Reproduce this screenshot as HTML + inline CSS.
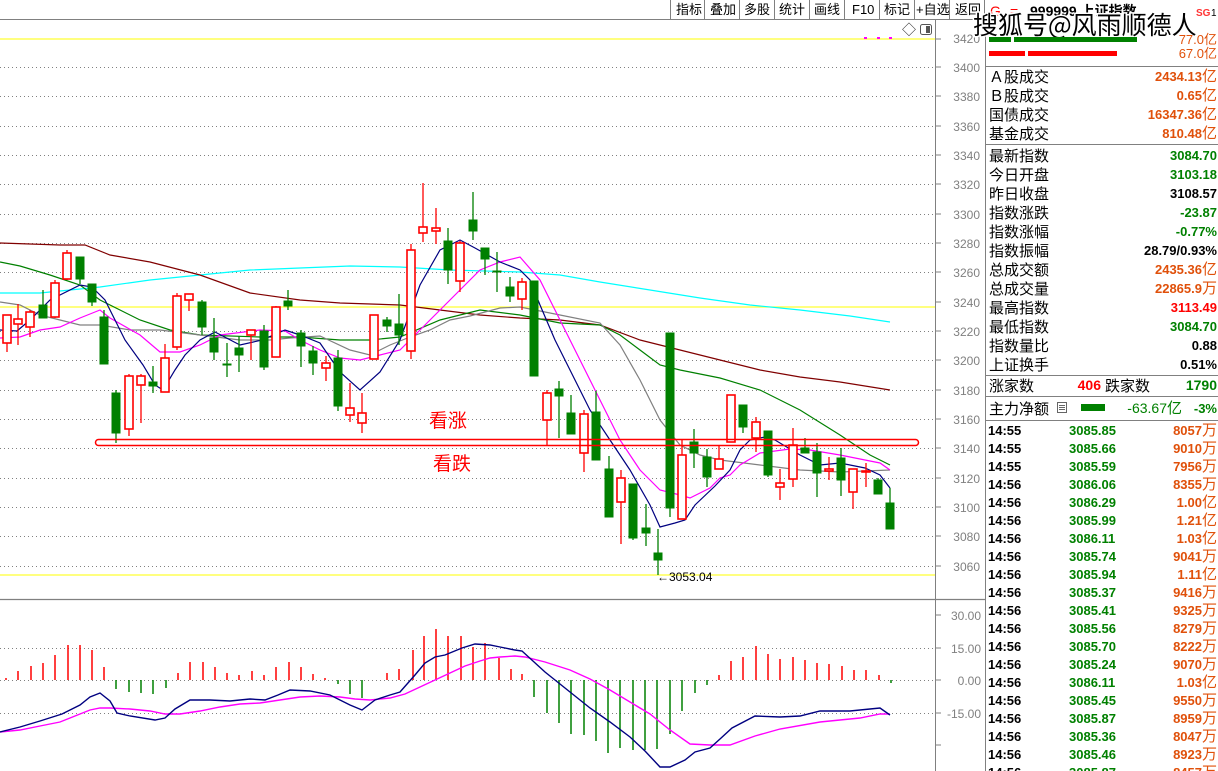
<!DOCTYPE html>
<html><head><meta charset="utf-8">
<style>
html,body{margin:0;padding:0;background:#fff;width:1218px;height:771px;overflow:hidden;position:relative;font-family:"Liberation Sans","Noto Sans CJK SC",sans-serif}
svg{position:absolute;left:0;top:0}
.r line{stroke:#f00;stroke-width:1.3}
.r rect{fill:#fff;stroke:#f00;stroke-width:1.6}
.g line{stroke:#008000;stroke-width:1.3}
.g rect{fill:#008000;stroke:#008000;stroke-width:1}
.ax{font-size:12px;fill:#808080;text-anchor:end}
.lb{font-size:15px;fill:#000}
.v{font-size:13px;font-weight:bold;text-anchor:end}
.t{font-size:13px;font-weight:bold}
</style></head><body>
<svg width="1218" height="771" viewBox="0 0 1218 771">
<!-- toolbar -->
<g font-size="13" fill="#000">
<line x1="0" y1="19.5" x2="985" y2="19.5" stroke="#808080"/>
<g stroke="#808080">
<line x1="670.5" y1="0" x2="670.5" y2="19"/><line x1="704.5" y1="0" x2="704.5" y2="19"/><line x1="739.5" y1="0" x2="739.5" y2="19"/><line x1="774.5" y1="0" x2="774.5" y2="19"/><line x1="809.5" y1="0" x2="809.5" y2="19"/><line x1="844.5" y1="0" x2="844.5" y2="19"/><line x1="879.5" y1="0" x2="879.5" y2="19"/><line x1="914.5" y1="0" x2="914.5" y2="19"/><line x1="949.5" y1="0" x2="949.5" y2="19"/><line x1="984.5" y1="0" x2="984.5" y2="19"/>
</g>
<text x="676" y="14">指标</text><text x="710" y="14">叠加</text><text x="744" y="14">多股</text><text x="779" y="14">统计</text><text x="814" y="14">画线</text><text x="852" y="14">F10</text><text x="884" y="14">标记</text><text x="916" y="14">+自选</text><text x="955" y="14">返回</text>
</g>
<!-- grid -->
<g stroke="#808080" stroke-dasharray="1,3" stroke-width="1">
<line x1="0" y1="67.5" x2="935" y2="67.5"/><line x1="0" y1="96.5" x2="935" y2="96.5"/><line x1="0" y1="126.5" x2="935" y2="126.5"/><line x1="0" y1="155.5" x2="935" y2="155.5"/><line x1="0" y1="184.5" x2="935" y2="184.5"/><line x1="0" y1="214.5" x2="935" y2="214.5"/><line x1="0" y1="243.5" x2="935" y2="243.5"/><line x1="0" y1="272.5" x2="935" y2="272.5"/><line x1="0" y1="331.5" x2="935" y2="331.5"/><line x1="0" y1="360.5" x2="935" y2="360.5"/><line x1="0" y1="390.5" x2="935" y2="390.5"/><line x1="0" y1="419.5" x2="935" y2="419.5"/><line x1="0" y1="448.5" x2="935" y2="448.5"/><line x1="0" y1="478.5" x2="935" y2="478.5"/><line x1="0" y1="507.5" x2="935" y2="507.5"/><line x1="0" y1="536.5" x2="935" y2="536.5"/><line x1="0" y1="566.5" x2="935" y2="566.5"/>
<line x1="0" y1="648.5" x2="935" y2="648.5"/><line x1="0" y1="680.5" x2="935" y2="680.5"/><line x1="0" y1="713.5" x2="935" y2="713.5"/>
</g>
<g stroke="#ffff33" stroke-width="1.3">
<line x1="0" y1="39" x2="935" y2="39"/><line x1="0" y1="307" x2="935" y2="307"/><line x1="0" y1="575" x2="935" y2="575"/>
</g>
<g fill="#ff00ff"><rect x="864" y="37" width="3" height="2"/><rect x="877" y="37" width="3" height="2"/><rect x="889" y="37" width="3" height="2"/></g>
<text x="902" y="35" font-size="14" fill="#333">◇</text>
<rect x="920.5" y="24.5" width="11" height="10" rx="2" fill="#fff" stroke="#555"/><rect x="926" y="26" width="4" height="7" fill="#555"/>
<!-- axis -->
<line x1="935.5" y1="20" x2="935.5" y2="771" stroke="#808080"/>
<g stroke="#808080">
<line x1="936" y1="39" x2="941" y2="39"/><line x1="936" y1="67" x2="941" y2="67"/><line x1="936" y1="96" x2="941" y2="96"/><line x1="936" y1="126" x2="941" y2="126"/><line x1="936" y1="155" x2="941" y2="155"/><line x1="936" y1="184" x2="941" y2="184"/><line x1="936" y1="214" x2="941" y2="214"/><line x1="936" y1="243" x2="941" y2="243"/><line x1="936" y1="272" x2="941" y2="272"/><line x1="936" y1="302" x2="941" y2="302"/><line x1="936" y1="331" x2="941" y2="331"/><line x1="936" y1="360" x2="941" y2="360"/><line x1="936" y1="390" x2="941" y2="390"/><line x1="936" y1="419" x2="941" y2="419"/><line x1="936" y1="448" x2="941" y2="448"/><line x1="936" y1="478" x2="941" y2="478"/><line x1="936" y1="507" x2="941" y2="507"/><line x1="936" y1="536" x2="941" y2="536"/><line x1="936" y1="566" x2="941" y2="566"/>
<line x1="936" y1="615" x2="941" y2="615"/><line x1="936" y1="648" x2="941" y2="648"/><line x1="936" y1="680" x2="941" y2="680"/><line x1="936" y1="713" x2="941" y2="713"/><line x1="936" y1="745" x2="941" y2="745"/>
</g>
<g class="ax">
<text x="980" y="43">3420</text><text x="980" y="72">3400</text><text x="980" y="101">3380</text><text x="980" y="131">3360</text><text x="980" y="160">3340</text><text x="980" y="189">3320</text><text x="980" y="219">3300</text><text x="980" y="248">3280</text><text x="980" y="277">3260</text><text x="980" y="307">3240</text><text x="980" y="336">3220</text><text x="980" y="365">3200</text><text x="980" y="395">3180</text><text x="980" y="424">3160</text><text x="980" y="453">3140</text><text x="980" y="483">3120</text><text x="980" y="512">3100</text><text x="980" y="541">3080</text><text x="980" y="571">3060</text>
<text x="981" y="620">30.00</text><text x="981" y="653">15.00</text><text x="981" y="685">0.00</text><text x="981" y="718">-15.00</text>
</g>
<line x1="0" y1="599.5" x2="985" y2="599.5" stroke="#808080" stroke-width="1.3"/>
<!-- MAs -->
<g fill="none" stroke-width="1.2">
<polyline stroke="#00ffff" points="0,293 40,293 100,287 150,280 200,275 250,270 300,268 350,266 400,267 450,270 520,272 560,275 600,282 650,290 700,298 750,305 800,310 850,316 890,322"/>
<polyline stroke="#800000" points="0,243 60,245 85,245 110,255 150,262 200,275 250,293 300,300 340,303 400,305 440,310 480,315 520,318 560,320 600,325 640,340 680,350 720,360 760,370 800,377 840,382 890,390"/>
<polyline stroke="#008000" points="0,262 20,266 50,275 80,285 100,300 120,310 140,320 170,330 200,335 260,337 300,337 340,340 370,340 400,337 440,320 480,310 520,315 560,323 600,325 620,335 640,350 660,365 680,370 720,378 760,390 800,410 840,435 870,455 890,465"/>
<polyline stroke="#808080" points="0,302 20,305 40,315 60,320 80,325 100,325 130,330 160,330 200,335 240,340 270,340 290,338 320,336 350,350 370,355 390,345 410,337 430,330 450,320 470,316 500,308 520,307 560,315 600,323 620,345 640,380 660,420 680,445 700,455 720,460 760,465 800,470 840,472 890,470"/>
<polyline stroke="#ff00ff" points="0,338 20,337 40,330 60,327 80,318 100,310 110,318 140,335 160,352 180,352 200,345 220,335 260,330 285,331 300,340 320,350 340,358 360,360 380,355 400,350 420,330 440,310 460,290 480,270 500,262 520,257 540,280 560,320 580,360 600,400 620,440 640,470 660,490 680,495 690,498 710,488 720,478 730,475 740,465 760,453 790,449 810,450 840,455 880,463 890,470"/>
<polyline stroke="#000080" points="0,330 17,331 30,320 50,300 80,285 92,287 105,300 125,340 143,365 155,385 163,390 175,370 185,355 200,340 215,332 240,345 262,340 285,330 300,335 320,343 340,372 360,390 380,372 400,340 420,285 440,250 460,240 475,248 500,262 520,270 530,280 540,305 555,340 570,370 590,410 610,440 630,470 650,505 660,527 675,523 685,520 695,505 715,486 730,470 740,450 750,440 765,437 775,440 800,455 820,465 840,463 865,468 880,475 890,488"/>
</g>
<!-- candles -->
<g class="r">
<line x1="7" y1="315" x2="7" y2="352"/><rect x="3" y="315" width="8" height="28"/>
<line x1="18" y1="304" x2="18" y2="345"/><rect x="14" y="319" width="8" height="5"/>
<line x1="30" y1="310" x2="30" y2="337"/><rect x="26" y="312" width="8" height="15"/>
<line x1="55" y1="280" x2="55" y2="318"/><rect x="51" y="283" width="8" height="34"/>
<line x1="67" y1="250" x2="67" y2="280"/><rect x="63" y="253" width="8" height="26"/>
<line x1="129" y1="374" x2="129" y2="436"/><rect x="125" y="376" width="8" height="53"/>
<line x1="141" y1="374" x2="141" y2="423"/><rect x="137" y="376" width="8" height="9"/>
<line x1="165" y1="344" x2="165" y2="392"/><rect x="161" y="358" width="8" height="34"/>
<line x1="177" y1="293" x2="177" y2="350"/><rect x="173" y="296" width="8" height="51"/>
<line x1="189" y1="294" x2="189" y2="311"/><rect x="185" y="294" width="8" height="6"/>
<line x1="251" y1="330" x2="251" y2="360"/><rect x="247" y="330" width="8" height="5"/>
<line x1="276" y1="306" x2="276" y2="357"/><rect x="272" y="307" width="8" height="50"/>
<line x1="326" y1="356" x2="326" y2="381"/><rect x="322" y="363" width="8" height="5"/>
<line x1="350" y1="383" x2="350" y2="422"/><rect x="346" y="408" width="8" height="7"/>
<line x1="362" y1="393" x2="362" y2="433"/><rect x="358" y="413" width="8" height="10"/>
<line x1="374" y1="315" x2="374" y2="359"/><rect x="370" y="315" width="8" height="44"/>
<line x1="411" y1="244" x2="411" y2="359"/><rect x="407" y="250" width="8" height="101"/>
<line x1="423" y1="183" x2="423" y2="242"/><rect x="419" y="227" width="8" height="6"/>
<line x1="436" y1="208" x2="436" y2="244"/><rect x="432" y="228" width="8" height="3"/>
<line x1="460" y1="241" x2="460" y2="292"/><rect x="456" y="243" width="8" height="38"/>
<line x1="522" y1="278" x2="522" y2="310"/><rect x="518" y="282" width="8" height="17"/>
<line x1="547" y1="390" x2="547" y2="445"/><rect x="543" y="393" width="8" height="27"/>
<line x1="584" y1="410" x2="584" y2="472"/><rect x="580" y="414" width="8" height="39"/>
<line x1="621" y1="470" x2="621" y2="544"/><rect x="617" y="478" width="8" height="24"/>
<line x1="682" y1="440" x2="682" y2="519"/><rect x="678" y="455" width="8" height="64"/>
<line x1="719" y1="446" x2="719" y2="469"/><rect x="715" y="459" width="8" height="10"/>
<line x1="731" y1="395" x2="731" y2="442"/><rect x="727" y="395" width="8" height="47"/>
<line x1="756" y1="417" x2="756" y2="452"/><rect x="752" y="422" width="8" height="16"/>
<line x1="780" y1="469" x2="780" y2="500"/><rect x="776" y="483" width="8" height="4"/>
<line x1="793" y1="428" x2="793" y2="487"/><rect x="789" y="445" width="8" height="34"/>
<line x1="829" y1="457" x2="829" y2="480"/><rect x="825" y="469" width="8" height="2"/>
<line x1="853" y1="469" x2="853" y2="509"/><rect x="849" y="469" width="8" height="23"/>
<line x1="866" y1="463" x2="866" y2="487"/><rect x="862" y="471" width="8" height="1"/>
</g>
<g class="g">
<line x1="43" y1="290" x2="43" y2="318"/><rect x="39" y="305" width="8" height="13"/>
<line x1="80" y1="257" x2="80" y2="284"/><rect x="76" y="257" width="8" height="22"/>
<line x1="92" y1="284" x2="92" y2="306"/><rect x="88" y="284" width="8" height="18"/>
<line x1="104" y1="310" x2="104" y2="364"/><rect x="100" y="317" width="8" height="47"/>
<line x1="116" y1="390" x2="116" y2="443"/><rect x="112" y="393" width="8" height="40"/>
<line x1="153" y1="366" x2="153" y2="393"/><rect x="149" y="382" width="8" height="4"/>
<line x1="202" y1="300" x2="202" y2="335"/><rect x="198" y="302" width="8" height="25"/>
<line x1="214" y1="318" x2="214" y2="360"/><rect x="210" y="338" width="8" height="14"/>
<line x1="227" y1="343" x2="227" y2="377"/><rect x="223" y="364" width="8" height="1"/>
<line x1="239" y1="336" x2="239" y2="372"/><rect x="235" y="348" width="8" height="7"/>
<line x1="264" y1="325" x2="264" y2="370"/><rect x="260" y="331" width="8" height="36"/>
<line x1="288" y1="290" x2="288" y2="310"/><rect x="284" y="301" width="8" height="5"/>
<line x1="301" y1="330" x2="301" y2="367"/><rect x="297" y="333" width="8" height="13"/>
<line x1="313" y1="346" x2="313" y2="375"/><rect x="309" y="351" width="8" height="12"/>
<line x1="338" y1="350" x2="338" y2="411"/><rect x="334" y="358" width="8" height="48"/>
<line x1="387" y1="317" x2="387" y2="332"/><rect x="383" y="320" width="8" height="6"/>
<line x1="399" y1="294" x2="399" y2="345"/><rect x="395" y="324" width="8" height="11"/>
<line x1="448" y1="228" x2="448" y2="284"/><rect x="444" y="241" width="8" height="29"/>
<line x1="473" y1="192" x2="473" y2="240"/><rect x="469" y="220" width="8" height="11"/>
<line x1="485" y1="248" x2="485" y2="275"/><rect x="481" y="248" width="8" height="11"/>
<line x1="497" y1="252" x2="497" y2="292"/><rect x="493" y="271" width="8" height="1"/>
<line x1="510" y1="277" x2="510" y2="302"/><rect x="506" y="287" width="8" height="9"/>
<line x1="534" y1="281" x2="534" y2="376"/><rect x="530" y="281" width="8" height="95"/>
<line x1="559" y1="381" x2="559" y2="438"/><rect x="555" y="389" width="8" height="7"/>
<line x1="571" y1="395" x2="571" y2="434"/><rect x="567" y="413" width="8" height="21"/>
<line x1="596" y1="391" x2="596" y2="460"/><rect x="592" y="412" width="8" height="48"/>
<line x1="609" y1="456" x2="609" y2="517"/><rect x="605" y="469" width="8" height="48"/>
<line x1="633" y1="484" x2="633" y2="540"/><rect x="629" y="484" width="8" height="54"/>
<line x1="646" y1="504" x2="646" y2="546"/><rect x="642" y="528" width="8" height="5"/>
<line x1="658" y1="529" x2="658" y2="575"/><rect x="654" y="553" width="8" height="7"/>
<line x1="670" y1="333" x2="670" y2="517"/><rect x="666" y="333" width="8" height="175"/>
<line x1="694" y1="429" x2="694" y2="468"/><rect x="690" y="442" width="8" height="11"/>
<line x1="707" y1="449" x2="707" y2="487"/><rect x="703" y="457" width="8" height="20"/>
<line x1="743" y1="405" x2="743" y2="433"/><rect x="739" y="405" width="8" height="22"/>
<line x1="768" y1="431" x2="768" y2="477"/><rect x="764" y="431" width="8" height="44"/>
<line x1="805" y1="438" x2="805" y2="453"/><rect x="801" y="448" width="8" height="5"/>
<line x1="817" y1="443" x2="817" y2="497"/><rect x="813" y="452" width="8" height="21"/>
<line x1="841" y1="448" x2="841" y2="496"/><rect x="837" y="458" width="8" height="22"/>
<line x1="878" y1="478" x2="878" y2="494"/><rect x="874" y="480" width="8" height="14"/>
<line x1="890" y1="488" x2="890" y2="529"/><rect x="886" y="503" width="8" height="26"/>
</g>
<!-- annotation -->
<rect x="95.5" y="439.5" width="823" height="6" rx="3" fill="none" stroke="#f00" stroke-width="1.5"/>
<text x="429" y="427" font-size="19" fill="#f00">看涨</text>
<text x="433" y="470" font-size="19" fill="#f00">看跌</text>
<text x="657" y="581" font-size="12" fill="#000">←3053.04</text>
<!-- MACD bars -->
<g stroke="#f00" stroke-width="1.5">
<line x1="6" y1="680" x2="6" y2="678"/><line x1="18" y1="680" x2="18" y2="671"/><line x1="31" y1="680" x2="31" y2="666"/><line x1="43" y1="680" x2="43" y2="663"/><line x1="55" y1="680" x2="55" y2="655"/><line x1="68" y1="680" x2="68" y2="645"/><line x1="80" y1="680" x2="80" y2="645"/><line x1="92" y1="680" x2="92" y2="650"/><line x1="104" y1="680" x2="104" y2="667"/>
<line x1="178" y1="680" x2="178" y2="673"/><line x1="190" y1="680" x2="190" y2="662"/><line x1="203" y1="680" x2="203" y2="662"/><line x1="215" y1="680" x2="215" y2="667"/><line x1="227" y1="680" x2="227" y2="673"/><line x1="239" y1="680" x2="239" y2="675"/><line x1="252" y1="680" x2="252" y2="671"/><line x1="264" y1="680" x2="264" y2="675"/><line x1="276" y1="680" x2="276" y2="667"/><line x1="289" y1="680" x2="289" y2="662"/><line x1="301" y1="680" x2="301" y2="667"/><line x1="313" y1="680" x2="313" y2="674"/><line x1="325" y1="680" x2="325" y2="678"/>
<line x1="387" y1="680" x2="387" y2="673"/><line x1="399" y1="680" x2="399" y2="669"/><line x1="413" y1="680" x2="413" y2="650"/><line x1="424" y1="680" x2="424" y2="636"/><line x1="436" y1="680" x2="436" y2="629"/><line x1="448" y1="680" x2="448" y2="636"/><line x1="461" y1="680" x2="461" y2="636"/><line x1="473" y1="680" x2="473" y2="647"/><line x1="485" y1="680" x2="485" y2="643"/><line x1="499" y1="680" x2="499" y2="658"/><line x1="511" y1="680" x2="511" y2="669"/><line x1="522" y1="680" x2="522" y2="674"/>
<line x1="719" y1="680" x2="719" y2="675"/><line x1="731" y1="680" x2="731" y2="661"/><line x1="743" y1="680" x2="743" y2="657"/><line x1="756" y1="680" x2="756" y2="646"/><line x1="768" y1="680" x2="768" y2="654"/><line x1="780" y1="680" x2="780" y2="659"/><line x1="793" y1="680" x2="793" y2="657"/><line x1="805" y1="680" x2="805" y2="660"/><line x1="817" y1="680" x2="817" y2="663"/><line x1="829" y1="680" x2="829" y2="664"/><line x1="842" y1="680" x2="842" y2="666"/><line x1="854" y1="680" x2="854" y2="670"/><line x1="866" y1="680" x2="866" y2="670"/><line x1="879" y1="680" x2="879" y2="675"/>
</g>
<g stroke="#008000" stroke-width="1.5">
<line x1="116" y1="680" x2="116" y2="689"/><line x1="129" y1="680" x2="129" y2="692"/><line x1="141" y1="680" x2="141" y2="693"/><line x1="153" y1="680" x2="153" y2="694"/><line x1="166" y1="680" x2="166" y2="688"/>
<line x1="338" y1="680" x2="338" y2="684"/><line x1="350" y1="680" x2="350" y2="694"/><line x1="362" y1="680" x2="362" y2="698"/>
<line x1="534" y1="680" x2="534" y2="697"/><line x1="547" y1="680" x2="547" y2="713"/><line x1="559" y1="680" x2="559" y2="723"/><line x1="571" y1="680" x2="571" y2="734"/><line x1="584" y1="680" x2="584" y2="735"/><line x1="596" y1="680" x2="596" y2="741"/><line x1="608" y1="680" x2="608" y2="753"/><line x1="620" y1="680" x2="620" y2="748"/><line x1="633" y1="680" x2="633" y2="750"/><line x1="645" y1="680" x2="645" y2="750"/><line x1="657" y1="680" x2="657" y2="749"/><line x1="670" y1="680" x2="670" y2="734"/><line x1="682" y1="680" x2="682" y2="711"/><line x1="695" y1="680" x2="695" y2="693"/><line x1="707" y1="680" x2="707" y2="685"/><line x1="891" y1="680" x2="891" y2="683"/>
</g>
<g fill="none" stroke-width="1.4">
<polyline stroke="#ff00ff" points="0,732 20,730 40,726 60,722 70,718 80,714 90,710 100,708 110,708 130,709 150,711 165,714 180,714 200,711 220,707 240,704 260,703 280,700 300,697 320,696 340,697 355,699 370,700 390,698 405,694 420,687 435,680 450,673 465,666 480,661 490,658 500,657 515,656 525,657 545,662 570,670 590,679 610,690 630,702 650,714 670,730 690,744 710,745 730,745 755,736 780,729 820,722 860,718 880,714 890,714"/>
<polyline stroke="#000080" points="0,732 20,727 40,721 62,714 70,710 80,705 90,697 100,693 110,701 117,713 130,716 155,720 165,718 175,709 190,700 210,700 230,701 250,699 265,700 278,695 290,690 310,691 330,695 350,705 362,710 375,700 390,695 400,692 415,675 425,663 435,657 445,655 462,648 475,644 490,645 500,647 515,650 522,651 545,672 570,692 590,708 610,722 630,737 645,751 660,767 670,767 685,760 695,752 710,748 720,739 732,728 755,716 780,717 800,716 820,711 850,711 870,709 880,708 890,715"/>
</g>
<!-- right panel -->
<line x1="985.5" y1="20" x2="985.5" y2="771" stroke="#808080"/>
<text x="990" y="16" font-size="14" fill="#f00">G</text>
<text x="1010" y="16" font-size="14" fill="#f00">=</text>
<text x="1030" y="16" font-size="14" font-weight="bold" fill="#000">999999 上证指数</text>
<text x="1196" y="16" font-size="10" font-weight="bold" fill="#f33">SG</text><text x="1211" y="16" font-size="10" fill="#000">1</text>
<text x="973" y="34" font-size="25" fill="#000" stroke="#fff" stroke-width="3" paint-order="stroke" font-family="'Noto Sans CJK SC',sans-serif">搜狐号@风雨顺德人</text>
<rect x="989" y="37" width="22" height="5" fill="#008000"/><rect x="1014" y="37" width="123" height="5" fill="#008000"/>
<rect x="989" y="51" width="36" height="5" fill="#f00"/><rect x="1028" y="51" width="89" height="5" fill="#f00"/>
<text x="1217" y="44" font-size="13" fill="#e0500a" text-anchor="end">77.0亿</text>
<text x="1217" y="58" font-size="13" fill="#e0500a" text-anchor="end">67.0亿</text>
<g stroke="#808080"><line x1="986" y1="66.5" x2="1218" y2="66.5"/><line x1="986" y1="144.5" x2="1218" y2="144.5"/><line x1="986" y1="375.5" x2="1218" y2="375.5"/><line x1="986" y1="396.5" x2="1218" y2="396.5"/><line x1="986" y1="420.5" x2="1218" y2="420.5"/></g>
<g class="lb">
<text x="989" y="82">Ａ股成交</text><text x="989" y="101">Ｂ股成交</text><text x="989" y="120">国债成交</text><text x="989" y="139">基金成交</text>
<text x="989" y="161">最新指数</text><text x="989" y="180">今日开盘</text><text x="989" y="199">昨日收盘</text><text x="989" y="218">指数涨跌</text><text x="989" y="237">指数涨幅</text><text x="989" y="256">指数振幅</text><text x="989" y="275">总成交额</text><text x="989" y="294">总成交量</text><text x="989" y="313">最高指数</text><text x="989" y="332">最低指数</text><text x="989" y="351">指数量比</text><text x="989" y="370">上证换手</text>
<text x="989" y="391">涨家数</text><text x="1105" y="391">跌家数</text>
<text x="989" y="414">主力净额</text>
</g>
<g class="v">
<text x="1217" y="81" fill="#e0500a">2434.13<tspan font-weight="normal" font-size="15">亿</tspan></text>
<text x="1217" y="100" fill="#e0500a">0.65<tspan font-weight="normal" font-size="15">亿</tspan></text>
<text x="1217" y="119" fill="#e0500a">16347.36<tspan font-weight="normal" font-size="15">亿</tspan></text>
<text x="1217" y="138" fill="#e0500a">810.48<tspan font-weight="normal" font-size="15">亿</tspan></text>
<text x="1217" y="160" fill="#008000">3084.70</text>
<text x="1217" y="179" fill="#008000">3103.18</text>
<text x="1217" y="198" fill="#000">3108.57</text>
<text x="1217" y="217" fill="#008000">-23.87</text>
<text x="1217" y="236" fill="#008000">-0.77%</text>
<text x="1217" y="255" fill="#000">28.79/0.93%</text>
<text x="1217" y="274" fill="#e0500a">2435.36<tspan font-weight="normal" font-size="15">亿</tspan></text>
<text x="1217" y="293" fill="#e0500a">22865.9<tspan font-weight="normal" font-size="15">万</tspan></text>
<text x="1217" y="312" fill="#f00">3113.49</text>
<text x="1217" y="331" fill="#008000">3084.70</text>
<text x="1217" y="350" fill="#000">0.88</text>
<text x="1217" y="369" fill="#000">0.51%</text>
<text x="1101" y="390" fill="#f00" font-size="14">406</text>
<text x="1217" y="390" fill="#008000" font-size="14">1790</text>
<text x="1182" y="413" fill="#008000" font-weight="normal" font-size="14">-63.67<tspan font-size="15">亿</tspan></text>
<text x="1217" y="413" fill="#008000" font-size="13">-3%</text>
</g>
<rect x="1057.5" y="402.5" width="9" height="10" fill="#fff" stroke="#666"/><line x1="1059" y1="405.5" x2="1065" y2="405.5" stroke="#666"/><line x1="1059" y1="407.5" x2="1065" y2="407.5" stroke="#666"/><line x1="1059" y1="409.5" x2="1065" y2="409.5" stroke="#666"/>
<rect x="1081" y="404" width="24" height="7" fill="#008000"/>
<!-- ticks -->
<g class="t">
<text x="988" y="435">14:55</text><text x="988" y="453">14:55</text><text x="988" y="471">14:55</text><text x="988" y="489">14:56</text><text x="988" y="507">14:56</text><text x="988" y="525">14:56</text><text x="988" y="543">14:56</text><text x="988" y="561">14:56</text><text x="988" y="579">14:56</text><text x="988" y="597">14:56</text><text x="988" y="615">14:56</text><text x="988" y="633">14:56</text><text x="988" y="651">14:56</text><text x="988" y="669">14:56</text><text x="988" y="687">14:56</text><text x="988" y="705">14:56</text><text x="988" y="723">14:56</text><text x="988" y="741">14:56</text><text x="988" y="759">14:56</text><text x="988" y="777">14:56</text>
</g>
<g class="t" fill="#008000">
<text x="1069" y="435">3085.85</text><text x="1069" y="453">3085.66</text><text x="1069" y="471">3085.59</text><text x="1069" y="489">3086.06</text><text x="1069" y="507">3086.29</text><text x="1069" y="525">3085.99</text><text x="1069" y="543">3086.11</text><text x="1069" y="561">3085.74</text><text x="1069" y="579">3085.94</text><text x="1069" y="597">3085.37</text><text x="1069" y="615">3085.41</text><text x="1069" y="633">3085.56</text><text x="1069" y="651">3085.70</text><text x="1069" y="669">3085.24</text><text x="1069" y="687">3086.11</text><text x="1069" y="705">3085.45</text><text x="1069" y="723">3085.87</text><text x="1069" y="741">3085.36</text><text x="1069" y="759">3085.46</text><text x="1069" y="777">3085.87</text>
</g>
<g class="v" fill="#e0500a">
<text x="1217" y="435">8057<tspan font-weight="normal" font-size="15">万</tspan></text><text x="1217" y="453">9010<tspan font-weight="normal" font-size="15">万</tspan></text><text x="1217" y="471">7956<tspan font-weight="normal" font-size="15">万</tspan></text><text x="1217" y="489">8355<tspan font-weight="normal" font-size="15">万</tspan></text><text x="1217" y="507">1.00<tspan font-weight="normal" font-size="15">亿</tspan></text><text x="1217" y="525">1.21<tspan font-weight="normal" font-size="15">亿</tspan></text><text x="1217" y="543">1.03<tspan font-weight="normal" font-size="15">亿</tspan></text><text x="1217" y="561">9041<tspan font-weight="normal" font-size="15">万</tspan></text><text x="1217" y="579">1.11<tspan font-weight="normal" font-size="15">亿</tspan></text><text x="1217" y="597">9416<tspan font-weight="normal" font-size="15">万</tspan></text><text x="1217" y="615">9325<tspan font-weight="normal" font-size="15">万</tspan></text><text x="1217" y="633">8279<tspan font-weight="normal" font-size="15">万</tspan></text><text x="1217" y="651">8222<tspan font-weight="normal" font-size="15">万</tspan></text><text x="1217" y="669">9070<tspan font-weight="normal" font-size="15">万</tspan></text><text x="1217" y="687">1.03<tspan font-weight="normal" font-size="15">亿</tspan></text><text x="1217" y="705">9550<tspan font-weight="normal" font-size="15">万</tspan></text><text x="1217" y="723">8959<tspan font-weight="normal" font-size="15">万</tspan></text><text x="1217" y="741">8047<tspan font-weight="normal" font-size="15">万</tspan></text><text x="1217" y="759">8923<tspan font-weight="normal" font-size="15">万</tspan></text><text x="1217" y="777">8457<tspan font-weight="normal" font-size="15">万</tspan></text>
</g>
</svg>
</body></html>
